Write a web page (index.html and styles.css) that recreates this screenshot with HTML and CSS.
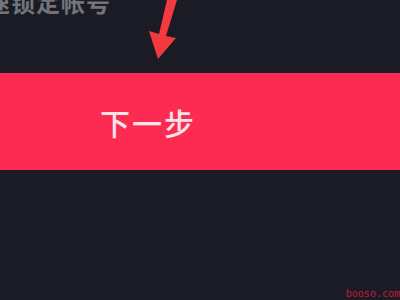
FILE: index.html
```html
<!DOCTYPE html>
<html>

<head>
    <meta charset="UTF-8">
    <title>下一步</title>
    <link rel="stylesheet" href="styles.css">
</head>

<body>
    <div class="screen">
        <p class="hint">速锁定帐号</p>
        <svg class="arrow" width="400" height="80" viewBox="0 0 400 80">
            <path d="M167 0 L177 0 L166 36 L176 38 L158 59 L149 31 L159 34 Z" fill="#f23a3f" />
        </svg>
        <div class="next-bar">
            <span class="next-label">下一步</span>
        </div>
        <span class="watermark">booso.com</span>
    </div>
</body>

</html>
```

FILE: styles.css
```css
* {
    box-sizing: border-box;
}

body,
html {
    margin: 0;
    padding: 0;
    overflow: hidden;
    height: 100vh;
    background-color: #1a1b24;
    font-family: "Noto Sans CJK SC", sans-serif;
}

.screen {
    position: relative;
    height: 300px;
    overflow: hidden;
}

.hint {
    margin: -10px 0 0 -14px;
    font-size: 24px;
    line-height: 24px;
    letter-spacing: 1px;
    color: #72737b;
    font-weight: bold;
}

.arrow {
    position: absolute;
    top: 0;
    left: 0;
}

.next-bar {
    margin-top: 59px;
    height: 97px;
    background-color: #fd2b51;
    display: flex;
    align-items: center;
    padding-left: 100px;
}

.next-label {
    font-size: 30px;
    font-weight: 500;
    letter-spacing: 2px;
    color: #f6e4e8;
}

.watermark {
    position: absolute;
    right: 0;
    bottom: 1px;
    font-family: "DejaVu Sans Mono", monospace;
    font-size: 10px;
    color: #c8173f;
}
```
